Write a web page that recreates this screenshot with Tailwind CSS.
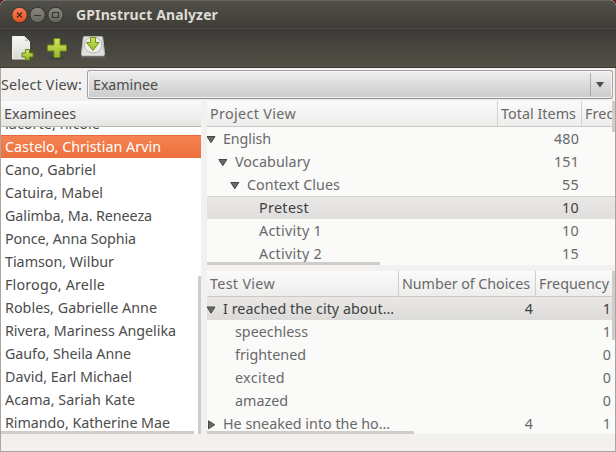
<!DOCTYPE html>
<html lang="en">
<head>
<meta charset="utf-8">
<title>GPInstruct Analyzer</title>
<script src="https://cdn.jsdelivr.net/npm/@tailwindcss/browser@4"></script>
</head>
<body class="w-[616px] h-[452px] overflow-hidden bg-[#641e20]">
<div class="w-[616px] h-[452px] flex flex-col rounded-t-[6px] overflow-hidden bg-[#f2f1f0] font-['Noto_Sans',sans-serif] text-[14.3px] leading-[23px] text-[#4c4c4c] whitespace-nowrap">
  <header class="h-[28px] shrink-0 flex items-center px-3 bg-linear-to-b from-[#504f49] to-[#3e3d38] border-t border-[#65645e] rounded-t-[6px]">
    <svg class="w-[52px] h-[18px] shrink-0" viewBox="0 0 52 18">
      <defs>
        <linearGradient id="red" x2="0" y2="1"><stop stop-color="#f68059"/><stop offset="1" stop-color="#e65224"/></linearGradient>
        <linearGradient id="gray" x2="0" y2="1"><stop stop-color="#8a8981"/><stop offset="1" stop-color="#65645d"/></linearGradient>
      </defs>
      <g stroke="#33322e" stroke-width="1"><circle cx="7.5" cy="9" r="7.7" fill="url(#red)"/><circle cx="25.5" cy="9" r="7.7" fill="url(#gray)"/><circle cx="43.5" cy="9" r="7.7" fill="url(#gray)"/></g>
      <path d="M5 6.500l5 5m0-5l-5 5" stroke="#51261a" stroke-width="1.400"/>
      <path d="M22 9.500h7M40.500 6.500h6v5h-6z" stroke="#383732" stroke-width="1.200" fill="none"/>
    </svg>
    <span data-w="142" class="ml-[12px] -mt-px font-bold text-[14px] text-[#dfdbd2]">GPInstruct Analyzer</span>
  </header>
  <nav class="h-[40px] shrink-0 flex items-start pl-[10px] pt-[6px] gap-[10px] bg-linear-to-b from-[#3c3b37] to-[#535046] border-t border-t-[#484741] border-b border-b-[#3b3934]">
    <svg class="w-[25px] h-[26px]" viewBox="0 0 25 26">
      <defs><linearGradient id="doc" x2="0" y2="1"><stop stop-color="#f8f8f8"/><stop offset="1" stop-color="#d7d7d5"/></linearGradient><linearGradient id="green" x2="0" y2="1"><stop stop-color="#d4e25c"/><stop offset="1" stop-color="#94b927"/></linearGradient></defs>
      <path d="M2.500 1.500h12l5 5v17.500H2.500z" fill="url(#doc)" stroke="#eeeeec"/>
      <path d="M14 1.500q2 2 1 5q3-1 5 1z" fill="#c2c2bf"/>
      <path d="M15.500 14.500h4v3.500h3.500v4h-3.500v3h-4v-3h-3.500v-4h3.500z" fill="url(#green)" stroke="#5f8b10"/>
    </svg>
    <svg class="w-[24px] h-[26px]" viewBox="0 0 24 26">
      <ellipse cx="12" cy="23" rx="8" ry="1.500" fill="#33322e" opacity=".5"/>
      <path d="M9 3.500h6v6.500h6.500v6h-6.500v6.500h-6v-6.500h-6.500v-6h6.500z" fill="url(#green)" stroke="#688d18"/>
    </svg>
    <svg class="w-[26px] h-[26px] ml-[1px]" viewBox="0 0 26 26">
      <defs><linearGradient id="band" x2="0" y2="1"><stop stop-color="#999a97"/><stop offset="1" stop-color="#3c3d3a"/></linearGradient></defs>
      <path d="M1.500 18.500h23v4q0 2-2 2h-19q-2 0-2-2z" fill="url(#band)" stroke="#5a5b58" stroke-width=".6"/>
      <path d="M4.500 1.500h17q1 0 1.200 1L24.500 18v2h-23v-2L3.300 2.500q.2-1 1.200-1z" fill="#dededb" stroke="#b5b5b2"/>
      <ellipse cx="13" cy="10" rx="8.800" ry="8" fill="#ededeb" stroke="#b8b8b5"/>
      <path d="M2 20h22" stroke="#fafafa"/>
      <path d="M10.500 2.500h5v5h3.500L13 15.500 6.500 7.500h4z" fill="url(#green)" stroke="#6e9512"/>
    </svg>
  </nav>
  <section class="h-[33px] shrink-0 flex border-x border-[#aaa69d] pt-[2px] items-start">
    <div class="w-[86px] leading-[30px]"><span data-w="81">Select View:</span></div>
    <div class="w-[526px] h-[29px] flex items-center rounded-[3px] border border-[#a5a3a1] border-b-[#8d8b89] bg-linear-to-b from-[#f0f0ef] via-[#dcdbdb] to-[#cdcccb] inset-shadow-[0_0_0_1px_#f5f5f5]">
      <span data-w="65" class="ml-[5px]">Examinee</span>
      <div class="ml-auto w-[22px] h-[23px] border-l border-[#aaa] flex items-center pl-[5px]"><svg class="w-[8px] h-[6px]" viewBox="0 0 8 6"><path d="M0 0h8L4 5.500z" fill="#4c4c4c"/></svg></div>
    </div>
  </section>
  <main class="h-[333px] shrink-0 flex gap-[6px] border-x border-[#aaa69d]">
    <section class="relative w-[200px] shrink-0 bg-white overflow-hidden">
      <div class="h-[26px] pl-[3px] leading-[26px] bg-linear-to-b from-[#fbfbfb] to-[#e6e5e4] border-b border-[#b9b6b2]"><span data-w="72">Examinees</span></div>
      <div class="h-[307px] flex flex-col justify-end overflow-hidden [&>div]:h-[23px] [&>div]:shrink-0 [&>div]:pl-[4px]">
        <div><span data-w="95">lacorte, nicole</span></div>
        <div class="bg-linear-to-b from-[#f58452] to-[#ec6f3d] inset-shadow-[0_1px_0_#e5693a] text-white"><span data-w="156">Castelo, Christian Arvin</span></div>
        <div><span data-w="91">Cano, Gabriel</span></div>
        <div><span data-w="98">Catuira, Mabel</span></div>
        <div><span data-w="147">Galimba, Ma. Reneeza</span></div>
        <div><span data-w="131">Ponce, Anna Sophia</span></div>
        <div><span data-w="109">Tiamson, Wilbur</span></div>
        <div><span data-w="100">Florogo, Arelle</span></div>
        <div><span data-w="152">Robles, Gabrielle Anne</span></div>
        <div><span data-w="171">Rivera, Mariness Angelika</span></div>
        <div><span data-w="126">Gaufo, Sheila Anne</span></div>
        <div><span data-w="127">David, Earl Michael</span></div>
        <div><span data-w="130">Acama, Sariah Kate</span></div>
        <div><span data-w="165">Rimando, Katherine Mae</span></div>
      </div>
      <i class="absolute left-0 bottom-0 w-[193px] h-[3px] bg-[#cfccca]"></i>
      <i class="absolute right-0 bottom-0 w-[3px] h-[158px] bg-[#cfccca]"></i>
    </section>
    <div class="w-[408px] flex flex-col gap-[6px] text-[#696969]">
      <section class="relative h-[164px] bg-[#fafaf9] overflow-hidden">
        <div class="h-[26px] grid grid-cols-[291px_84px_33px] leading-[26px] bg-linear-to-b from-[#fbfbfb] to-[#eeedec] border-b border-[#cbc8c5]">
          <div class="pl-[3px] border-r border-[#d2d0ce]"><span data-w="86">Project View</span></div>
          <div class="pl-[3px] border-r border-[#d2d0ce]"><span data-w="75">Total Items</span></div>
          <div class="pl-[3px] overflow-hidden"><span data-w="71">Frequency</span></div>
        </div>
        <div class="[&>div]:h-[23px] [&>div]:flex [&>div]:items-center [&>div]:justify-between [&>div]:pr-[36px] [&_svg]:w-[10px] [&_svg]:h-[8px] [&_svg]:mr-[7px] [&_svg]:inline-block [&_svg]:align-[0px] [&_svg]:fill-[#696969] [&_svg]:stroke-[#454545]">
          <div><span><svg class="-ml-px" viewBox="0 0 10 8"><path d="M1 .5h8L5 6.700z"/></svg><span data-w="48">English</span></span><span data-w="25">480</span></div>
          <div class="pl-[11px]"><span><svg viewBox="0 0 10 8"><path d="M.8 .5h8L4.800 6.700z"/></svg><span data-w="75">Vocabulary</span></span><span data-w="25">151</span></div>
          <div class="pl-[23px]"><span><svg viewBox="0 0 10 8"><path d="M.8 .5h8L4.800 6.700z"/></svg><span data-w="93">Context Clues</span></span><span data-w="17">55</span></div>
          <div class="pl-[52px] bg-linear-to-b from-[#e9e8e7] to-[#dfdedd] inset-shadow-[0_1px_0_#d5d3d1] text-[#3f3f3f]"><span data-w="50">Pretest</span><span data-w="17">10</span></div>
          <div class="pl-[52px]"><span data-w="63">Activity 1</span><span data-w="17">10</span></div>
          <div class="pl-[52px]"><span data-w="63">Activity 2</span><span data-w="17">15</span></div>
        </div>
        <i class="absolute left-0 bottom-0 w-[173px] h-[3px] bg-[#cfccca]"></i>
        <i class="absolute right-0 top-0 w-[3px] h-[31px] bg-[#cfccca]"></i>
      </section>
      <section class="relative h-[163px] bg-[#fafaf9] overflow-hidden">
        <div class="h-[26px] grid grid-cols-[192px_137px_79px] leading-[26px] bg-linear-to-b from-[#fbfbfb] to-[#eeedec] border-b border-[#cbc8c5]">
          <div class="pl-[3px] border-r border-[#d2d0ce]"><span data-w="65">Test View</span></div>
          <div class="pl-[3px] border-r border-[#d2d0ce]"><span data-w="128">Number of Choices</span></div>
          <div class="pl-[3px]"><span data-w="70">Frequency</span></div>
        </div>
        <div class="[&>div]:h-[23px] [&>div]:grid [&>div]:grid-cols-[192px_134px_78px] [&>div]:items-center [&>div>*:nth-child(n+2)]:text-right [&_svg]:w-[10px] [&_svg]:h-[10px] [&_svg]:mr-[6px] [&_svg]:inline-block [&_svg]:align-[-1px] [&_svg]:fill-[#696969] [&_svg]:stroke-[#454545]">
          <div class="bg-linear-to-b from-[#e9e8e7] to-[#dcdbda] text-[#3f3f3f]"><div><svg viewBox="0 0 10 10"><path d="M0 2h8L4 8.200z"/></svg><span data-w="171">I reached the city about…</span></div><div>4</div><div>1</div></div>
          <div><div class="pl-[28px]"><span data-w="73">speechless</span></div><div></div><div>1</div></div>
          <div><div class="pl-[28px]"><span data-w="71">frightened</span></div><div></div><div>0</div></div>
          <div><div class="pl-[28px]"><span data-w="50">excited</span></div><div></div><div>0</div></div>
          <div><div class="pl-[28px]"><span data-w="53">amazed</span></div><div></div><div>0</div></div>
          <div><div><svg viewBox="0 0 10 10"><path d="M1.500 .8v8L7.700 4.800z"/></svg><span data-w="167">He sneaked into the ho…</span></div><div>4</div><div>1</div></div>
        </div>
        <i class="absolute left-0 bottom-0 w-[207px] h-[3px] bg-[#cfccca]"></i>
        <i class="absolute right-0 top-0 w-[3px] h-[69px] bg-[#cfccca]"></i>
      </section>
    </div>
  </main>
  <footer class="h-[18px] shrink-0 border-x border-b border-[#aaa69d]"></footer>
</div>
<script>
// Set tracking so each label fills its measured text width.
function fitLabels() {
  document.querySelectorAll('[data-w]').forEach(function (el) {
    var spacing = 0, range = document.createRange();
    el.style.letterSpacing = '0.01px';
    range.selectNodeContents(el);
    for (var pass = 0; pass < 4; pass++) {
      spacing += (+el.dataset.w - range.getBoundingClientRect().width) / el.textContent.length;
      el.style.letterSpacing = spacing + 'px';
    }
  });
}
fitLabels();
window.addEventListener('load', function () {
  fitLabels();
  requestAnimationFrame(fitLabels);
  setTimeout(fitLabels, 60);
});
document.fonts.ready.then(fitLabels);
</script>
</body>
</html>
